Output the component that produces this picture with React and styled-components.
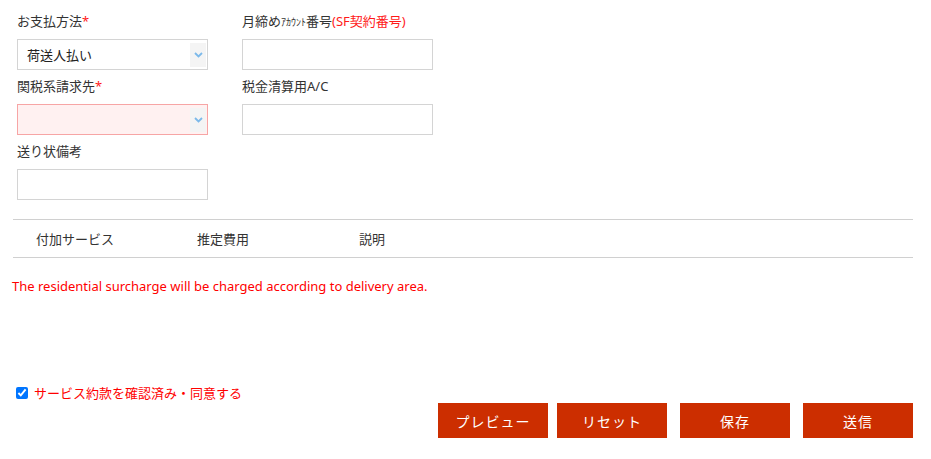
import styled, { createGlobalStyle } from 'styled-components';

const GlobalStyle = createGlobalStyle`
    body {
        margin: 0;
        background: #fff;
        font-family: "Noto Sans", "Noto Sans CJK JP", sans-serif;
        color: #333;
    }
`

function Chevron() {
    return (
        <svg width="9" height="6" viewBox="0 0 9 6">
            <path d="M1 1 L4.5 4.5 L8 1" fill="none" stroke="#7cb9ea" strokeWidth="1.8"/>
        </svg>
    )
}

function SelectField({ value, error }) {
    return (
        <SelectBox error={error}>
            <SelectValue>{value}</SelectValue>
            <ArrowBox><Chevron /></ArrowBox>
        </SelectBox>
    )
}

export default function App() {
    return (
        <Page>
            <GlobalStyle />
            <FormGrid>
                <Field>
                    <Label>お支払方法<Req>*</Req></Label>
                    <SelectField value="荷送人払い" />
                </Field>
                <Field>
                    <Label>月締め<Small>ｱｶｳﾝﾄ</Small>番号<Req>(SF契約番号)</Req></Label>
                    <Input />
                </Field>
                <Field>
                    <Label>関税系請求先<Req>*</Req></Label>
                    <SelectField value="" error />
                </Field>
                <Field>
                    <Label>税金清算用A/C</Label>
                    <Input />
                </Field>
                <Field>
                    <Label>送り状備考</Label>
                    <Input />
                </Field>
            </FormGrid>

            <TableHead>
                <HeadCell>付加サービス</HeadCell>
                <HeadCell>推定費用</HeadCell>
                <HeadCell>説明</HeadCell>
            </TableHead>

            <Notice>The residential surcharge will be charged according to delivery area.</Notice>

            <Agree>
                <input type="checkbox" defaultChecked />
                <span>サービス約款を確認済み・同意する</span>
            </Agree>

            <Actions>
                <Button>プレビュー</Button>
                <Button gap={9}>リセット</Button>
                <Button gap={13}>保存</Button>
                <Button gap={13}>送信</Button>
            </Actions>
        </Page>
    )
}

const Page = styled.div`
    width: 901px;
    padding: 11px 0 0 12px;
    font-size: 13px;
`

const FormGrid = styled.div`
    display: grid;
    grid-template-columns: 191px 191px;
    column-gap: 34px;
    margin-left: 5px;
`

const Field = styled.div`
    display: flex;
    flex-direction: column;
    margin-bottom: 6px;
`

const Label = styled.div`
    line-height: 20px;
    height: 20px;
    margin-bottom: 8px;
    color: #333;
    white-space: nowrap;
`

const Req = styled.span`
    color: #ff1a1a;
`

const Small = styled.span`
    font-size: 10px;
`

const Input = styled.div`
    box-sizing: border-box;
    height: 31px;
    border: 1px solid #d4d4d4;
    background: #fff;
`

const SelectBox = styled.div`
    box-sizing: border-box;
    height: 31px;
    display: flex;
    padding: 3px 1px 2px 9px;
    border: 1px solid ${props => props.error ? '#f7a5a5' : '#d4d4d4'};
    background: ${props => props.error ? '#fff1f1' : '#fff'};
`

const SelectValue = styled.div`
    flex: 1;
    line-height: 24px;
    color: #222;
`

const ArrowBox = styled.div`
    width: 16px;
    display: flex;
    align-items: center;
    justify-content: center;
    background: #f4f4f4;
`

const TableHead = styled.div`
    display: grid;
    grid-template-columns: 161px 162px 1fr;
    margin: 13px 0 0 1px;
    padding-left: 23px;
    height: 37px;
    align-items: center;
    border-top: 1px solid #d0d0d0;
    border-bottom: 1px solid #d0d0d0;
`

const HeadCell = styled.div`
    color: #333;
`

const Notice = styled.div`
    margin-top: 18px;
    line-height: 20px;
    color: #ff0000;
`

const Agree = styled.label`
    display: flex;
    align-items: center;
    gap: 6px;
    margin-top: 87px;
    color: #ff0000;

    input {
        margin: 0 0 0 4px;
        width: 12px;
        height: 12px;
    }
`

const Actions = styled.div`
    display: flex;
    justify-content: flex-end;
    margin-top: 1px;
`

const Button = styled.button`
    width: 110px;
    height: 35px;
    margin-left: ${props => props.gap || 0}px;
    border: none;
    background: #cc2e00;
    color: #fff;
    font-family: inherit;
    font-size: 14px;
    letter-spacing: 1px;
`
